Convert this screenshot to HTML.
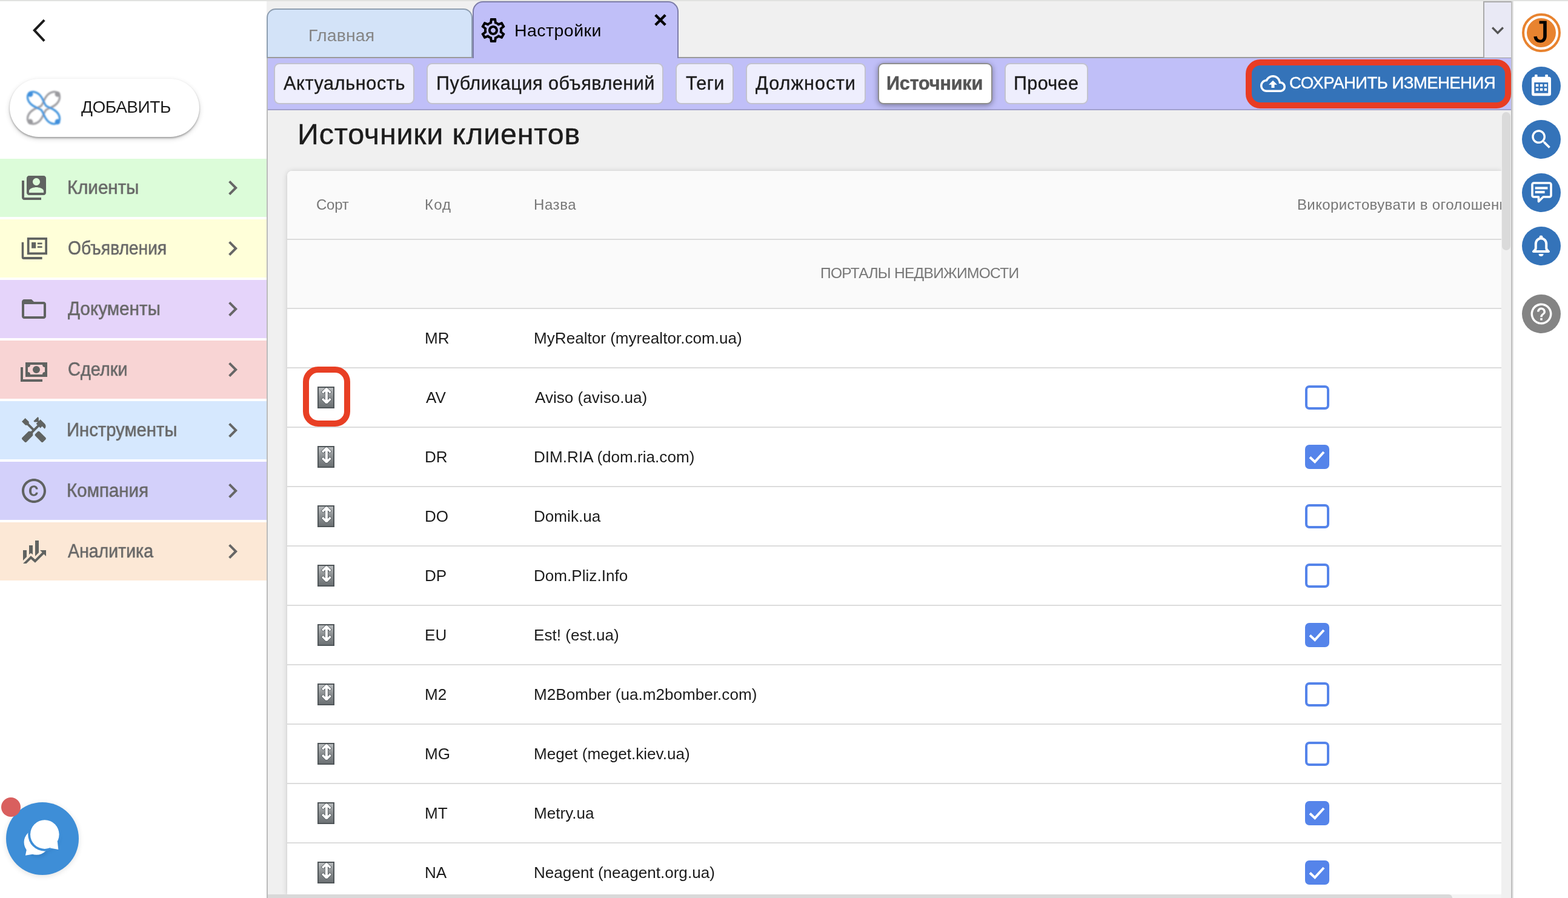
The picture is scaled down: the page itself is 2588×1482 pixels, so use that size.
<!DOCTYPE html><html lang="ru"><head><meta charset="utf-8"><title>Настройки — Источники клиентов</title><style>
*{box-sizing:border-box;margin:0;padding:0}
html,body{width:2588px;height:1482px;overflow:hidden;background:#fff}
body{position:relative;font-family:"Liberation Sans",sans-serif;color:#1c1c1c;-webkit-font-smoothing:antialiased}
.abs{position:absolute}
.t{position:absolute;white-space:nowrap;line-height:1;transform-origin:0 0;will-change:transform}
svg{position:absolute;display:block;overflow:visible}
#topline{left:0;top:0;width:2588px;height:2px;background:#e1e2e0}
/* sidebar */
#side{left:0;top:2px;width:440px;height:1480px;background:#fff}
#add{left:16px;top:130px;width:313px;height:96px;border-radius:48px;background:#fff;box-shadow:0 2px 3px rgba(0,0,0,.30),0 3px 9px rgba(0,0,0,.16)}
.mi{left:0;width:440px;height:96px}
/* main */
#main{left:440px;top:2px;width:2056px;height:1480px;background:#f0f0f0}
#mainborder{left:440px;top:96px;width:2px;height:1386px;background:#bbb}
#tabline{left:440px;top:94px;width:2056px;height:2px;background:#9a9a9a}
#tab1{left:440px;top:14px;width:340px;height:82px;background:#d3e3f8;border:2px solid #8e9eb0;border-bottom:2px solid #9a9a9a;border-radius:15px 15px 0 0}
#tab2{left:780px;top:2px;width:340px;height:94px;background:#c0bff8;border:2px solid #7d7da8;border-bottom:none;border-radius:17px 17px 0 0}
#dd{left:2448px;top:2px;width:47px;height:93px;background:#e9e9f5;border-left:2px solid #aaa;border-top:2px solid #aaa}
#tool{left:442px;top:96px;width:2053px;height:86px;background:#c0bff8;border-bottom:2px solid #a2a1cc}
.pill{top:104px;height:68px;background:#eeeefd;border:2px solid #c2c2ce;border-radius:9px}
.pill.on{background:#fff;border-color:#8e8e8e;box-shadow:0 2px 10px rgba(0,0,0,.38)}
#savered{left:2056px;top:98px;width:438px;height:81px;border:10px solid #e83c24;border-radius:24px;background:#3473b9}
#rside{left:2498px;top:2px;width:92px;height:1480px;background:#fff}
#rborder{left:2494px;top:2px;width:4px;height:1480px;background:linear-gradient(90deg,#c0c0c0 50%,#e2e2e2 50%)}
.circ{left:2512px;width:64px;height:64px;border-radius:50%;background:#3473b9}
/* card */
#card{left:474px;top:282px;width:2004px;height:1194px;background:#fff;border-radius:8px 0 0 0;box-shadow:0 1px 10px rgba(0,0,0,.17),0 0 2px rgba(0,0,0,.08);overflow:hidden}
.hr{left:0;width:2004px;height:2px;background:#dcdcdc}
.cb{left:1680px;width:40px;height:40px;border:4px solid #5584ea;border-radius:7px;background:#fff}
.cb.on{background:#5584ea}
.sorti{left:50px;width:28px;height:36px;border:2px solid #4f5558;background:linear-gradient(#b9bcbe,#8d9193 45%,#6c7174)}
.sorti .t{left:-2px;top:-2px;width:28px;height:36px;text-align:center;font-family:'DejaVu Sans',sans-serif;font-weight:bold;font-size:35px;line-height:33px;color:#fff;-webkit-text-stroke:1.600px #50565a;paint-order:stroke fill}
#vthumb{left:2479px;top:185px;width:14px;height:228px;border-radius:7px;background:#dadada}
#hthumb{left:442px;top:1476px;width:1955px;height:8px;border-radius:0 6px 0 0;background:#d9d9d9}
#htrack{left:442px;top:1476px;width:2036px;height:6px;background:#f4f4f4}
#redbox{left:500px;top:605px;width:78px;height:99px;border:10px solid #e83f24;border-radius:25px}
</style></head><body>
<div class="abs" id="topline"></div>
<div class="abs" id="side"></div>
<svg style="left:50px;top:26px" width="30" height="48" viewBox="0 0 30 48"><polyline points="23.200,7.200 6.800,24 23.200,41.600" fill="none" stroke="#1c1c1c" stroke-width="4"/></svg>
<div class="abs" id="add"></div>
<svg style="left:40.200px;top:145.500px" width="64" height="64" viewBox="-32 -32 64 64"><defs><filter id="bl" x="-20%" y="-20%" width="140%" height="140%"><feGaussianBlur stdDeviation="0.85"/></filter></defs>
<g filter="url(#bl)" fill="none" stroke-width="3.300">
<path d="M-34,0C-34,5.800 -27.700,10.500 -20,10.500C-11,10.500 -7,6.200 0,5.200C7,6.200 11,10.500 20,10.500C27.700,10.500 34,5.800 34,0C34,-5.800 27.700,-10.500 20,-10.500C11,-10.500 7,-6.200 0,-5.200C-7,-6.200 -11,-10.500 -20,-10.500C-27.700,-10.500 -34,-5.800 -34,0Z" stroke="#a0a0a4" transform="rotate(-45)"/>
<path d="M-34,0C-34,5.800 -27.700,10.500 -20,10.500C-11,10.500 -7,6.200 0,5.200C7,6.200 11,10.500 20,10.500C27.700,10.500 34,5.800 34,0C34,-5.800 27.700,-10.500 20,-10.500C11,-10.500 7,-6.200 0,-5.200C-7,-6.200 -11,-10.500 -20,-10.500C-27.700,-10.500 -34,-5.800 -34,0Z" stroke="#4a98de" transform="rotate(45)"/>
<circle cx="-22" cy="-22.500" r="4.400" fill="#3f8fdc" stroke="none"/><circle cx="23" cy="23" r="4.400" fill="#3f8fdc" stroke="none"/>
<circle cx="23" cy="-22.500" r="4.400" fill="#9a9a9e" stroke="none"/><circle cx="-22" cy="23" r="4.400" fill="#9a9a9e" stroke="none"/>
</g></svg>
<div class="t" id="t1" style="left:133.70px;top:162.99px;font-size:28px;color:#1c1c1c;letter-spacing:-0.457px;">ДОБАВИТЬ</div>
<div class="abs mi" style="top:262px;background:#dcfcd9"><svg style="left:32px;top:24px" width="48" height="48" viewBox="0 0 24 24" fill="#606361"><path d="M4 6H2v14c0 1.100.900 2 2 2h14v-2H4V6zm16-4H8c-1.100 0-2 .900-2 2v12c0 1.100.900 2 2 2h12c1.100 0 2-.900 2-2V4c0-1.100-.900-2-2-2zm-6 2c1.660 0 3 1.340 3 3s-1.340 3-3 3-3-1.340-3-3 1.340-3 3-3zm6 12H8v-1.500c0-1.990 4-3 6-3s6 1.010 6 3V16z"/></svg><div class="t" id="t2" style="left:110.50px;top:32.41px;font-size:31.4px;color:#666;transform:scaleX(0.9402);-webkit-text-stroke:.55px #666;">Клиенты</div><svg style="left:360px;top:24px" width="48" height="48" viewBox="0 0 24 24" fill="#666"><path d="M10 6L8.590 7.410 13.170 12l-4.580 4.590L10 18l6-6z"/></svg></div>
<div class="abs mi" style="top:362px;background:#ffffd9"><svg style="left:32px;top:24px" width="48" height="48" viewBox="0 0 24 24" fill="#606361"><path d="M1.850 6.900h1.750V19h15.200v2H3.600a1.750 1.750 0 0 1-1.750-1.750z"/><path d="M6.400 3h16.600v14.100H6.400zM8.250 4.850v10.400h12.900V4.850z" fill-rule="evenodd"/><rect x="10.050" y="6.900" width="3.550" height="4.950"/><rect x="14.900" y="7.250" width="3.900" height="1.350"/><rect x="14.900" y="10.150" width="3.900" height="1.300"/></svg><div class="t" id="t3" style="left:111.50px;top:32.41px;font-size:31.4px;color:#666;transform:scaleX(0.8983);-webkit-text-stroke:.55px #666;">Объявления</div><svg style="left:360px;top:24px" width="48" height="48" viewBox="0 0 24 24" fill="#666"><path d="M10 6L8.590 7.410 13.170 12l-4.580 4.590L10 18l6-6z"/></svg></div>
<div class="abs mi" style="top:462px;background:#e5d4fa"><svg style="left:32px;top:24px" width="48" height="48" viewBox="0 0 24 24" fill="#606361"><path d="M20 6h-8l-2-2H4c-1.100 0-1.990.900-1.990 2L2 18c0 1.100.900 2 2 2h16c1.100 0 2-.900 2-2V8c0-1.100-.900-2-2-2zm0 12H4V8h16v10z"/></svg><div class="t" id="t4" style="left:112.10px;top:32.41px;font-size:31.4px;color:#666;transform:scaleX(0.9450);-webkit-text-stroke:.55px #666;">Документы</div><svg style="left:360px;top:24px" width="48" height="48" viewBox="0 0 24 24" fill="#666"><path d="M10 6L8.590 7.410 13.170 12l-4.580 4.590L10 18l6-6z"/></svg></div>
<div class="abs mi" style="top:562px;background:#f8d4d4"><svg style="left:32px;top:24px" width="48" height="48" viewBox="0 0 24 24" fill="#606361"><path d="M5,6H23V18H5V6M14,9A3,3 0 0,1 17,12A3,3 0 0,1 14,15A3,3 0 0,1 11,12A3,3 0 0,1 14,9M9,8A2,2 0 0,1 7,10V14A2,2 0 0,1 9,16H19A2,2 0 0,1 21,14V10A2,2 0 0,1 19,8H9M1,10H3V20H19V22H1V10Z" fill-rule="evenodd"/></svg><div class="t" id="t5" style="left:111.50px;top:32.41px;font-size:31.4px;color:#666;transform:scaleX(0.9202);-webkit-text-stroke:.55px #666;">Сделки</div><svg style="left:360px;top:24px" width="48" height="48" viewBox="0 0 24 24" fill="#666"><path d="M10 6L8.590 7.410 13.170 12l-4.580 4.590L10 18l6-6z"/></svg></div>
<div class="abs mi" style="top:662px;background:#d6e8fe"><svg style="left:32px;top:24px" width="48" height="48" viewBox="0 0 24 24" fill="#606361"><path d="M21.670 18.170l-5.300-5.300h-.990l-2.540 2.540v.990l5.300 5.300c.390.390 1.020.390 1.410 0l2.120-2.120c.390-.380.390-1.020 0-1.410z"/><path d="M17.340 10.190l1.410-1.410 2.120 2.120c1.170-1.170 1.170-3.070 0-4.240l-3.540-3.540-1.410 1.410V1.710l-.700-.710-3.540 3.540.710.710h2.830l-1.410 1.410 1.060 1.060-2.890 2.890-4.130-4.130V5.060L4.830 2.040 2 4.870 5.030 7.900h1.410l4.130 4.130-.850.850H7.600l-5.300 5.300c-.390.390-.390 1.020 0 1.410l2.120 2.120c.390.390 1.020.390 1.410 0l5.300-5.300v-2.120l5.150-5.150 1.060 1.050z"/></svg><div class="t" id="t6" style="left:110.20px;top:32.41px;font-size:31.4px;color:#666;transform:scaleX(0.9318);-webkit-text-stroke:.55px #666;">Инструменты</div><svg style="left:360px;top:24px" width="48" height="48" viewBox="0 0 24 24" fill="#666"><path d="M10 6L8.590 7.410 13.170 12l-4.580 4.590L10 18l6-6z"/></svg></div>
<div class="abs mi" style="top:762px;background:#d3d0fa"><svg style="left:32px;top:24px" width="48" height="48" viewBox="0 0 24 24" fill="#606361"><path d="M10.080 10.860c.050-.330.160-.620.300-.870s.340-.460.590-.620c.240-.150.540-.220.910-.230.230.010.440.050.630.130.200.090.380.210.520.360s.250.330.340.530.130.420.140.640h1.790c-.020-.470-.110-.900-.280-1.290s-.400-.730-.700-1.010-.660-.500-1.080-.660-.880-.230-1.390-.230c-.650 0-1.220.110-1.700.340s-.880.530-1.200.920-.560.840-.710 1.360S8 11.290 8 11.870v.270c0 .580.080 1.120.230 1.640s.390.970.710 1.350.720.690 1.200.910 1.050.340 1.700.340c.470 0 .910-.080 1.320-.230s.770-.360 1.080-.630.560-.580.740-.940.290-.740.300-1.150h-1.790c-.010.210-.060.400-.150.580s-.210.330-.360.460-.320.230-.520.300c-.190.070-.390.090-.600.100-.360-.010-.660-.080-.890-.230-.250-.160-.450-.370-.590-.620s-.250-.550-.300-.880-.080-.670-.080-1v-.270c0-.350.030-.680.080-1.010zM12 2C6.480 2 2 6.480 2 12s4.480 10 10 10 10-4.480 10-10S17.520 2 12 2zm0 18c-4.410 0-8-3.590-8-8s3.590-8 8-8 8 3.590 8 8-3.590 8-8 8z"/></svg><div class="t" id="t7" style="left:110.20px;top:32.41px;font-size:31.4px;color:#666;transform:scaleX(0.9400);-webkit-text-stroke:.55px #666;">Компания</div><svg style="left:360px;top:24px" width="48" height="48" viewBox="0 0 24 24" fill="#666"><path d="M10 6L8.590 7.410 13.170 12l-4.580 4.590L10 18l6-6z"/></svg></div>
<div class="abs mi" style="top:862px;background:#fce8d6"><svg style="left:32px;top:24px" width="48" height="48" viewBox="0 0 24 24" fill="#606361"><path d="M6,16.500L3,19.440V11H6M11,14.660L9.430,13.320L8,14.640V7H11M16,13L13,16V3H16M18.810,12.810L17,11H22V16L20.210,14.210L13,21.360L9.530,18.340L5.750,22H3L9.470,15.660L13,18.640"/></svg><div class="t" id="t8" style="left:112.20px;top:32.41px;font-size:31.4px;color:#666;transform:scaleX(0.9071);-webkit-text-stroke:.55px #666;">Аналитика</div><svg style="left:360px;top:24px" width="48" height="48" viewBox="0 0 24 24" fill="#666"><path d="M10 6L8.590 7.410 13.170 12l-4.580 4.590L10 18l6-6z"/></svg></div>
<div class="abs" style="left:10px;top:1324px;width:120px;height:120px;border-radius:50%;background:#3e8ed7;box-shadow:0 2px 10px rgba(0,0,0,.12)"></div>
<svg style="left:10px;top:1324px" width="120" height="120" viewBox="0 0 120 120"><defs><filter id="cs" x="-30%" y="-30%" width="160%" height="160%"><feGaussianBlur stdDeviation="2.500"/></filter></defs>
<g fill="#2c70b3" opacity=".40" filter="url(#cs)" transform="translate(2,5)"><circle cx="63.800" cy="53.100" r="23"/><circle cx="50.400" cy="66" r="20"/></g>
<circle cx="50.400" cy="66" r="20.800" fill="#fff"/><path d="M31.900 87.800L34.400 75.500L45.500 85.500z" fill="#fff"/>
<circle cx="63.800" cy="53.100" r="27.600" fill="#3e8ed7"/>
<circle cx="63.800" cy="53.100" r="23.800" fill="#fff"/><path d="M86.300 77.900L72.500 75.500L84.800 64.500z" fill="#fff"/>
</svg>
<div class="abs" style="left:2px;top:1316px;width:32px;height:32px;border-radius:50%;background:#d95f5e"></div>
<div class="abs" id="main"></div>
<div class="abs" id="tabline"></div>
<div class="abs" id="tab1"></div>
<div class="t" id="t9" style="left:509.10px;top:43.95px;font-size:28.4px;color:#858585;letter-spacing:0.183px;">Главная</div>
<div class="abs" id="tab2"></div>
<svg style="left:790.300px;top:25.900px" width="48" height="48" viewBox="0 0 24 24" fill="#000"><path d="M19.430 12.980c.040-.320.070-.640.070-.980 0-.340-.030-.660-.070-.980l2.110-1.650c.190-.150.240-.420.120-.640l-2-3.460c-.090-.160-.260-.250-.440-.250-.060 0-.120.010-.170.030l-2.490 1c-.520-.400-1.080-.730-1.690-.980l-.380-2.650C14.460 2.180 14.250 2 14 2h-4c-.250 0-.460.180-.490.420l-.380 2.650c-.610.250-1.170.590-1.690.980l-2.490-1c-.060-.020-.120-.030-.180-.030-.170 0-.340.090-.430.250l-2 3.460c-.130.220-.070.490.120.640l2.110 1.650c-.040.320-.070.650-.070.980 0 .330.030.660.070.980l-2.110 1.650c-.190.150-.240.420-.120.640l2 3.460c.090.160.260.250.440.250.060 0 .120-.010.170-.030l2.490-1c.520.400 1.080.730 1.690.980l.380 2.650c.030.240.240.420.490.420h4c.250 0 .460-.180.490-.420l.380-2.650c.610-.250 1.170-.590 1.690-.980l2.490 1c.060.020.120.030.180.030.170 0 .340-.090.430-.250l2-3.460c.120-.220.070-.490-.120-.640l-2.110-1.650zm-1.980-1.710c.040.310.050.520.050.730 0 .210-.020.430-.050.730l-.140 1.130.890.700 1.080.840-.700 1.210-1.270-.510-1.040-.420-.900.680c-.430.320-.840.560-1.250.730l-1.060.430-.160 1.130-.200 1.350h-1.400l-.190-1.350-.160-1.130-1.060-.430c-.430-.180-.830-.410-1.230-.710l-.910-.700-1.060.430-1.270.510-.700-1.210 1.080-.840.890-.700-.140-1.130c-.030-.310-.050-.540-.050-.740s.020-.430.050-.730l.140-1.130-.890-.700-1.080-.840.700-1.210 1.270.510 1.040.420.900-.680c.430-.320.840-.560 1.250-.730l1.060-.430.160-1.130.200-1.350h1.390l.190 1.350.160 1.130 1.060.430c.430.180.830.410 1.230.710l.910.700 1.060-.430 1.270-.510.700 1.210-1.070.850-.890.700.140 1.130zM12 8c-2.210 0-4 1.790-4 4s1.790 4 4 4 4-1.790 4-4-1.790-4-4-4zm0 6c-1.100 0-2-.900-2-2s.900-2 2-2 2 .900 2 2-.900 2-2 2z"/></svg>
<div class="t" id="t10" style="left:849.40px;top:35.97px;font-size:28.5px;color:#000;letter-spacing:0.450px;">Настройки</div>
<svg style="left:1079px;top:21.600px" width="22" height="22" viewBox="0 0 22 22"><path d="M2.800 2.800L19.200 19.200M19.200 2.800L2.800 19.200" stroke="#000" stroke-width="4.400" fill="none"/></svg>
<div class="abs" id="dd"></div>
<svg style="left:2451.700px;top:29.900px" width="40" height="40" viewBox="0 0 24 24" fill="#555"><path d="M16.590 8.590L12 13.170 7.410 8.590 6 10l6 6 6-6z"/></svg>
<div class="abs" id="tool"></div>
<div class="abs" id="mainborder"></div>
<div class="abs pill" style="left:452px;width:232px"></div>
<div class="t" id="t11" style="left:468.20px;top:122.09px;font-size:30.6px;color:#1c1c1c;letter-spacing:0.636px;-webkit-text-stroke:.35px #1c1c1c;">Актуальность</div>
<div class="abs pill" style="left:704px;width:391px"></div>
<div class="t" id="t12" style="left:719.70px;top:122.09px;font-size:30.6px;color:#1c1c1c;letter-spacing:0.510px;-webkit-text-stroke:.35px #1c1c1c;">Публикация объявлений</div>
<div class="abs pill" style="left:1115px;width:96px"></div>
<div class="t" id="t13" style="left:1132.10px;top:122.09px;font-size:30.6px;color:#1c1c1c;letter-spacing:0.367px;-webkit-text-stroke:.35px #1c1c1c;">Теги</div>
<div class="abs pill" style="left:1231px;width:198px"></div>
<div class="t" id="t14" style="left:1247.40px;top:122.09px;font-size:30.6px;color:#1c1c1c;letter-spacing:1.100px;-webkit-text-stroke:.35px #1c1c1c;">Должности</div>
<div class="abs pill on" style="left:1449px;width:189px"></div>
<div class="t" id="t15" style="left:1463.40px;top:122.09px;font-size:30.6px;color:#555;font-weight:bold;letter-spacing:-0.175px;-webkit-text-stroke:.5px #555;">Источники</div>
<div class="abs pill" style="left:1658px;width:138px"></div>
<div class="t" id="t16" style="left:1672.90px;top:122.09px;font-size:30.6px;color:#1c1c1c;letter-spacing:0.320px;-webkit-text-stroke:.35px #1c1c1c;">Прочее</div>
<div class="abs" id="savered"></div>
<svg style="left:2080px;top:117px" width="42" height="42" viewBox="0 0 24 24" fill="#fff"><path d="M19.350 10.040C18.670 6.590 15.640 4 12 4 9.110 4 6.600 5.640 5.350 8.040 2.340 8.360 0 10.910 0 14c0 3.310 2.690 6 6 6h13c2.760 0 5-2.240 5-5 0-2.640-2.050-4.780-4.650-4.960zM19 18H6c-2.210 0-4-1.790-4-4 0-2.050 1.530-3.760 3.560-3.970l1.070-.110.500-.950C8.080 7.140 9.940 6 12 6c2.620 0 4.880 1.860 5.390 4.430l.300 1.500 1.530.110c1.560.100 2.780 1.410 2.780 2.960 0 1.650-1.350 3-3 3zM8 13h2.550v3h2.900v-3H16l-4-4z"/></svg>
<div class="t" id="t17" style="left:2128.10px;top:122.93px;font-size:27.6px;color:#fff;letter-spacing:-0.589px;-webkit-text-stroke:.4px #fff;">СОХРАНИТЬ ИЗМЕНЕНИЯ</div>
<div class="t" id="t18" style="left:490.80px;top:197.24px;font-size:48.5px;color:#1c1c1c;letter-spacing:0.788px;-webkit-text-stroke:.4px #1c1c1c;">Источники клиентов</div>
<div class="abs" id="card">
<div class="abs" style="left:0;top:0;width:2004px;height:226px;background:#fafafa"></div>
<div class="abs hr" style="top:112px"></div><div class="abs hr" style="top:226px"></div>
<div class="t" id="t19" style="left:48.10px;top:43.88px;font-size:24px;color:#777;letter-spacing:-0.233px;">Сорт</div><div class="t" id="t20" style="left:226.90px;top:43.88px;font-size:24px;color:#777;letter-spacing:1.150px;">Код</div><div class="t" id="t21" style="left:406.50px;top:43.88px;font-size:24px;color:#777;letter-spacing:0.575px;">Назва</div><div class="t" id="t22" style="left:1666.80px;top:43.88px;font-size:24px;color:#777;letter-spacing:0.360px;">Використовувати в оголошеннях</div>
<div class="t" id="t23" style="left:880.10px;top:157.17px;font-size:24.6px;color:#777;letter-spacing:-0.758px;">ПОРТАЛЫ НЕДВИЖИМОСТИ</div>
<div class="abs hr" style="top:324px"></div>
<div class="t" id="t24" style="left:227.00px;top:263.20px;font-size:26.1px;color:#1c1c1c;">MR</div><div class="t" id="t25" style="left:406.80px;top:263.20px;font-size:26.1px;color:#1c1c1c;">MyRealtor (myrealtor.com.ua)</div>
<div class="abs hr" style="top:422px"></div>
<div class="t" id="t26" style="left:229.00px;top:361.20px;font-size:26.1px;color:#1c1c1c;">AV</div><div class="t" id="t27" style="left:408.80px;top:361.20px;font-size:26.1px;color:#1c1c1c;">Aviso (aviso.ua)</div>
<div class="abs sorti" style="top:356px"><div class="t">↕</div></div>
<div class="abs cb" style="top:354px"></div>
<div class="abs hr" style="top:520px"></div>
<div class="t" id="t28" style="left:227.00px;top:459.20px;font-size:26.1px;color:#1c1c1c;">DR</div><div class="t" id="t29" style="left:406.80px;top:459.20px;font-size:26.1px;color:#1c1c1c;">DIM.RIA (dom.ria.com)</div>
<div class="abs sorti" style="top:454px"><div class="t">↕</div></div>
<div class="abs cb on" style="top:452px"><svg style="left:-4px;top:-4px" width="40" height="40" viewBox="0 0 40 40"><polyline points="8,20.500 16.200,28.200 31,12" fill="none" stroke="#fff" stroke-width="4"/></svg></div>
<div class="abs hr" style="top:618px"></div>
<div class="t" id="t30" style="left:227.00px;top:557.20px;font-size:26.1px;color:#1c1c1c;">DO</div><div class="t" id="t31" style="left:406.80px;top:557.20px;font-size:26.1px;color:#1c1c1c;">Domik.ua</div>
<div class="abs sorti" style="top:552px"><div class="t">↕</div></div>
<div class="abs cb" style="top:550px"></div>
<div class="abs hr" style="top:716px"></div>
<div class="t" id="t32" style="left:227.00px;top:655.20px;font-size:26.1px;color:#1c1c1c;">DP</div><div class="t" id="t33" style="left:406.80px;top:655.20px;font-size:26.1px;color:#1c1c1c;">Dom.Pliz.Info</div>
<div class="abs sorti" style="top:650px"><div class="t">↕</div></div>
<div class="abs cb" style="top:648px"></div>
<div class="abs hr" style="top:814px"></div>
<div class="t" id="t34" style="left:227.00px;top:753.20px;font-size:26.1px;color:#1c1c1c;">EU</div><div class="t" id="t35" style="left:406.80px;top:753.20px;font-size:26.1px;color:#1c1c1c;">Est! (est.ua)</div>
<div class="abs sorti" style="top:748px"><div class="t">↕</div></div>
<div class="abs cb on" style="top:746px"><svg style="left:-4px;top:-4px" width="40" height="40" viewBox="0 0 40 40"><polyline points="8,20.500 16.200,28.200 31,12" fill="none" stroke="#fff" stroke-width="4"/></svg></div>
<div class="abs hr" style="top:912px"></div>
<div class="t" id="t36" style="left:227.00px;top:851.20px;font-size:26.1px;color:#1c1c1c;">M2</div><div class="t" id="t37" style="left:406.80px;top:851.20px;font-size:26.1px;color:#1c1c1c;">M2Bomber (ua.m2bomber.com)</div>
<div class="abs sorti" style="top:846px"><div class="t">↕</div></div>
<div class="abs cb" style="top:844px"></div>
<div class="abs hr" style="top:1010px"></div>
<div class="t" id="t38" style="left:227.00px;top:949.20px;font-size:26.1px;color:#1c1c1c;">MG</div><div class="t" id="t39" style="left:406.80px;top:949.20px;font-size:26.1px;color:#1c1c1c;">Meget (meget.kiev.ua)</div>
<div class="abs sorti" style="top:944px"><div class="t">↕</div></div>
<div class="abs cb" style="top:942px"></div>
<div class="abs hr" style="top:1108px"></div>
<div class="t" id="t40" style="left:227.00px;top:1047.20px;font-size:26.1px;color:#1c1c1c;">MT</div><div class="t" id="t41" style="left:406.80px;top:1047.20px;font-size:26.1px;color:#1c1c1c;">Metry.ua</div>
<div class="abs sorti" style="top:1042px"><div class="t">↕</div></div>
<div class="abs cb on" style="top:1040px"><svg style="left:-4px;top:-4px" width="40" height="40" viewBox="0 0 40 40"><polyline points="8,20.500 16.200,28.200 31,12" fill="none" stroke="#fff" stroke-width="4"/></svg></div>
<div class="abs hr" style="top:1206px"></div>
<div class="t" id="t42" style="left:227.00px;top:1145.20px;font-size:26.1px;color:#1c1c1c;">NA</div><div class="t" id="t43" style="left:406.80px;top:1145.20px;font-size:26.1px;color:#1c1c1c;">Neagent (neagent.org.ua)</div>
<div class="abs sorti" style="top:1140px"><div class="t">↕</div></div>
<div class="abs cb on" style="top:1138px"><svg style="left:-4px;top:-4px" width="40" height="40" viewBox="0 0 40 40"><polyline points="8,20.500 16.200,28.200 31,12" fill="none" stroke="#fff" stroke-width="4"/></svg></div>
</div>
<div class="abs" id="redbox"></div>
<div class="abs" style="left:2478px;top:183px;width:16px;height:1299px;background:#f0f0f0"></div>
<div class="abs" id="vthumb"></div>
<div class="abs" id="htrack"></div><div class="abs" id="hthumb"></div>
<div class="abs" id="rside"></div><div class="abs" id="rborder"></div>
<div class="abs" style="left:2512px;top:22px;width:64px;height:64px;border-radius:50%;border:4px solid #e8832f;background:#fff"></div><div class="abs" style="left:2520px;top:30px;width:48px;height:48px;border-radius:50%;background:#e8832f"></div>
<div class="t" id="t44" style="left:2531.00px;top:27.76px;font-size:50px;color:#000;-webkit-text-stroke:.8px #000;">J</div>
<div class="abs circ" style="top:110px"></div>
<div class="abs circ" style="top:198px"></div>
<div class="abs circ" style="top:286px"></div>
<div class="abs circ" style="top:374px"></div>
<div class="abs circ" style="top:486px;background:#848484"></div>
<svg style="left:2528px;top:123px" width="32" height="36" viewBox="0 0 32 36" fill="#fff"><rect x="5" y="0" width="4.600" height="6" rx="1.200"/><rect x="22.300" y="0" width="4.600" height="6" rx="1.200"/><path fill-rule="evenodd" d="M3.500 3.800h25a3.500 3.500 0 0 1 3.500 3.500v24.400a3.500 3.500 0 0 1-3.500 3.500h-25a3.500 3.500 0 0 1-3.500-3.500V7.300a3.500 3.500 0 0 1 3.500-3.500zM4.300 13.100v17.700h22.900V13.100z"/><rect x="6.900" y="15.800" width="4.300" height="4.200"/><rect x="13.900" y="15.800" width="4.300" height="4.200"/><rect x="20.800" y="15.800" width="4.300" height="4.200"/><rect x="6.900" y="22.600" width="4.300" height="4.200"/><rect x="13.900" y="22.600" width="4.300" height="4.200"/><rect x="20.800" y="22.600" width="4.300" height="4.200"/></svg>
<svg style="left:2523px;top:209px" width="42" height="42" viewBox="0 0 24 24" fill="#fff"><path d="M15.500 14h-.790l-.280-.270C15.410 12.590 16 11.110 16 9.500 16 5.910 13.090 3 9.500 3S3 5.910 3 9.500 5.910 16 9.500 16c1.610 0 3.090-.590 4.230-1.570l.270.280v.790l5 4.990L20.490 19l-4.990-5zm-6 0C7.010 14 5 11.990 5 9.500S7.010 5 9.500 5 14 7.010 14 9.500 11.990 14 9.500 14z"/></svg>
<svg style="left:2527px;top:300px" width="35" height="36" viewBox="0 0 35 36"><path d="M4.500 2h26a2.500 2.500 0 0 1 2.500 2.500v18a2.500 2.500 0 0 1-2.500 2.500H20l-7.500 7.500V25H4.500A2.500 2.500 0 0 1 2 22.500v-18A2.500 2.500 0 0 1 4.500 2z" fill="none" stroke="#fff" stroke-width="3.600" stroke-linejoin="round"/><rect x="6.700" y="8.400" width="20.700" height="4" fill="#fff"/><rect x="6.700" y="15.100" width="15.900" height="4" fill="#fff"/></svg>
<svg style="left:2528px;top:388px" width="31" height="36" viewBox="0 0 31 36"><path d="M15.500 5.500c-5.200 0-8.700 4-8.700 9.500v6.500c0 2-1.500 3.800-3.800 5.500h25c-2.300-1.700-3.800-3.500-3.800-5.500V15c0-5.500-3.500-9.500-8.700-9.500z" fill="none" stroke="#fff" stroke-width="4" stroke-linejoin="round"/><circle cx="15.500" cy="3.600" r="3" fill="#fff"/><path d="M11.500 31h8a4 4 0 0 1-8 0z" fill="#fff"/></svg>
<svg style="left:2523px;top:497px" width="42" height="42" viewBox="0 0 24 24" fill="#fff"><path d="M11 18h2v-2h-2v2zm1-16C6.480 2 2 6.480 2 12s4.480 10 10 10 10-4.480 10-10S17.520 2 12 2zm0 18c-4.410 0-8-3.590-8-8s3.590-8 8-8 8 3.590 8 8-3.590 8-8 8zm0-14c-2.210 0-4 1.790-4 4h2c0-1.100.900-2 2-2s2 .900 2 2c0 2-3 1.750-3 5h2c0-2.250 3-2.500 3-5 0-2.210-1.790-4-4-4z"/></svg>
</body></html>
